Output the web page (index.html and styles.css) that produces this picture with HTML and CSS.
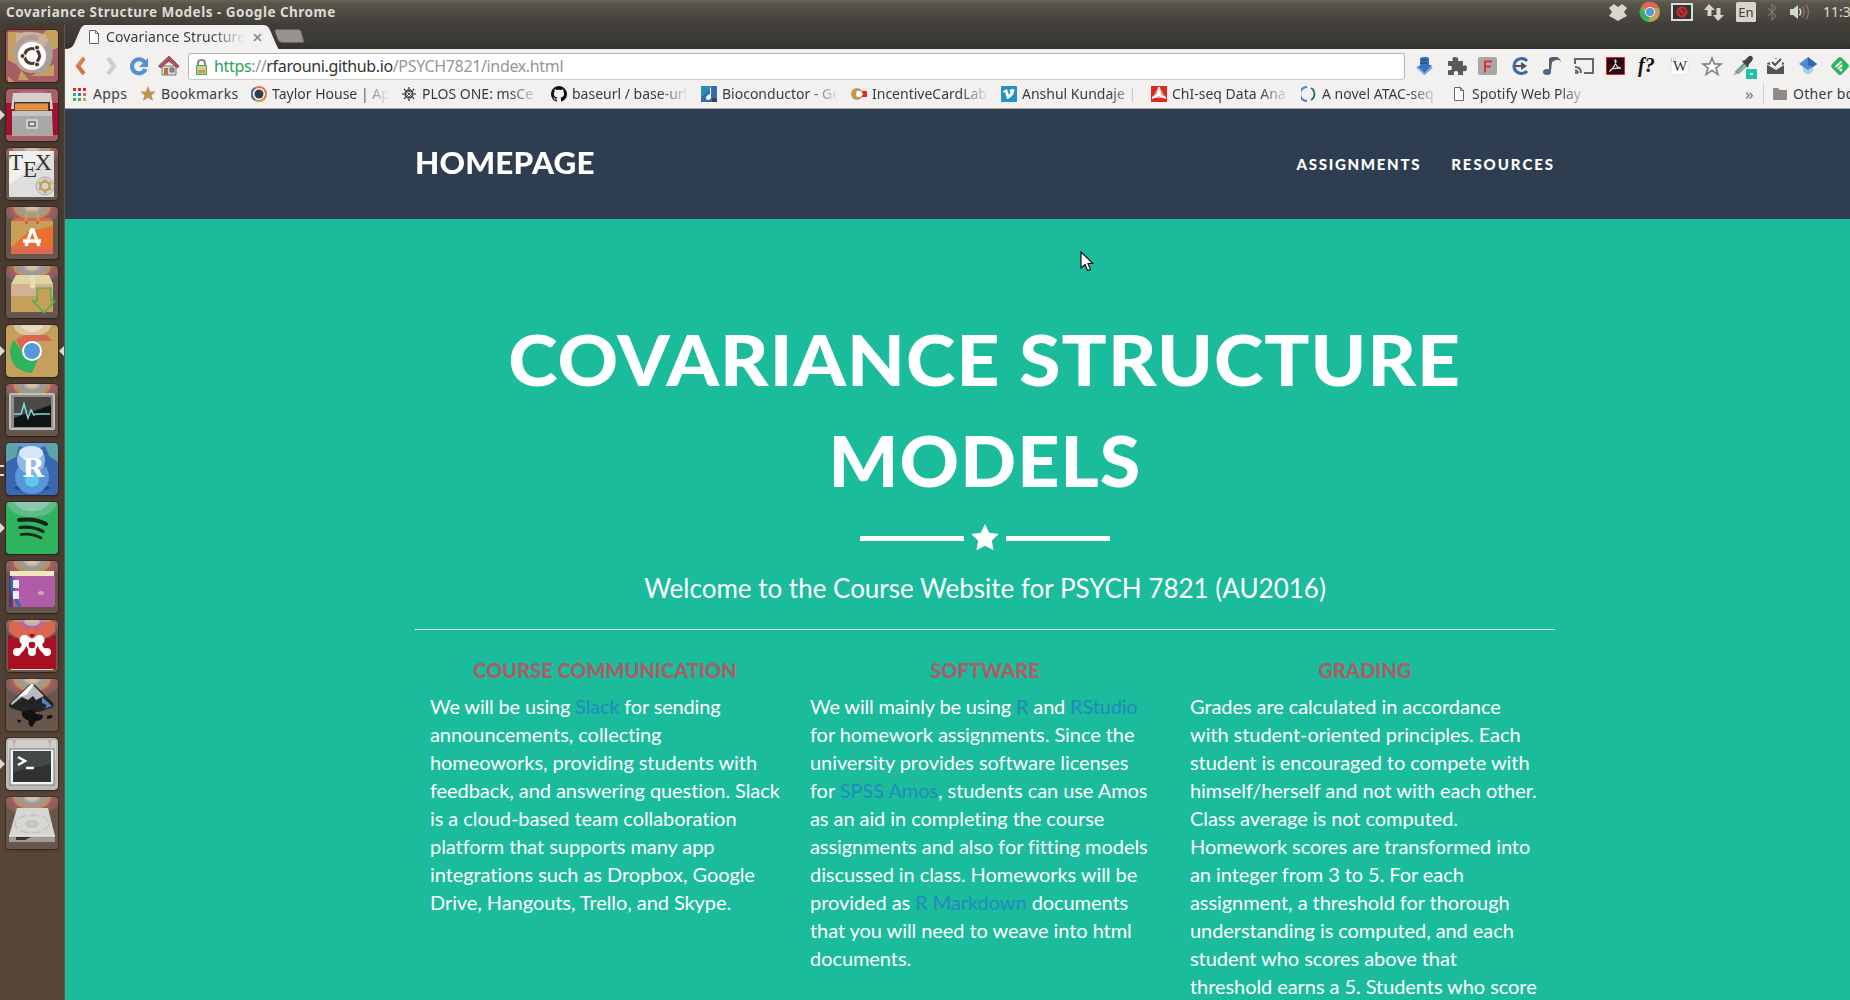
FILE: index.html
```html
<!DOCTYPE html>
<html lang="en">
<head>
<meta charset="utf-8">
<title>Covariance Structure Models</title>
<link rel="stylesheet" href="styles.css">
</head>
<body>
<header class="panel">
  <span class="panel-title">Covariance Structure Models - Google Chrome</span>
  <svg class="tray" width="242" height="24" viewBox="1608 0 242 24">
    <path fill="#d8d5ce" d="M1614 4l4 3 4-3 5 4-3 4 3 4-4 2-5 3-5-3-4-2 3-4-3-4z"/>
    <circle cx="1650" cy="12" r="10" fill="#c4a05a"/>
    <path fill="#d96852" d="M1650 12l-9-5a10 10 0 0 1 18 1h-9z"/>
    <path fill="#2fb35c" d="M1641 7l5 8 4 2-2 5a10 10 0 0 1-7-15z"/>
    <circle cx="1650" cy="12" r="5" fill="#eee"/><circle cx="1650" cy="12" r="4" fill="#5797dc"/>
    <rect x="1672" y="4" width="20" height="16" fill="#333" stroke="#ddd" stroke-width="2"/>
    <circle cx="1682" cy="12" r="4.500" fill="#84202a" stroke="#b93335" stroke-width="2.200"/><path stroke="#b93335" stroke-width="2" d="M1679 9l6 6"/>
    <path fill="#d8d5ce" d="M1709 4l-5 6h3.500v6h4v-6h3.500zM1718 21l-5-6h3.500V8h4v7h3.500z"/>
    <rect x="1736" y="2" width="20" height="20" rx="1.500" fill="#d8d5ce"/>
    <path fill="none" stroke="#77736c" stroke-width="1.300" d="M1768 8l8 8-4 4V4l4 4-8 8"/>
    <path fill="#d8d5ce" d="M1790 9h3l5-4v14l-5-4h-3z"/>
    <path fill="none" stroke="#d8d5ce" stroke-width="1.600" d="M1799.500 8.500q2.500 3.500 0 7"/>
    <path fill="none" stroke="#8c6f64" stroke-width="1.600" d="M1802.500 6.500q3.500 5.500 0 11M1806 4.500q5 7.500 0 15"/>
    <text x="1746" y="17" class="tray-lang">En</text>
    <text x="1823" y="17" class="tray-time">11:3</text>
  </svg>
</header>
<div class="desktop">
  <nav class="launcher">
    <div class="slot"><svg viewBox="0 0 52 52"><rect width="52" height="52" rx="4" fill="#a65d66"/><path fill="#c4a05a" d="M2 2h12l-6 16 2 16 13 16H12l4-12L2 30zM40 0h12v18l-12 4-8-12zM34 42l14-8v12H24zM2 46l6 6H2z"/><circle cx="26" cy="25" r="18" fill="#b7a092"/><path d="M10 4q15-5 30 1l4 10-34 5z" fill="#cfae9b"/><path d="M8 22q8-18 24-14M42 12q8 22-12 32" fill="none" stroke="#a8a09b" stroke-width="5"/><circle cx="26" cy="26" r="14" fill="#fff"/><circle cx="26" cy="26" r="7.500" fill="none" stroke="#4b392f" stroke-width="3.200"/><path d="M26 26h-9M26 26l5-8.500M26 26l5 8.500" stroke="#fff" stroke-width="1.600"/><circle cx="26" cy="26" r="5.500" fill="#fff"/><g fill="#4b392f" stroke="#fff"><circle cx="16.500" cy="26" r="2.500"/><circle cx="31" cy="17.500" r="2.500"/><circle cx="31" cy="34.500" r="2.500"/></g></svg></div>
    <div class="slot on"><svg viewBox="0 0 52 52"><rect width="52" height="52" rx="4" fill="#a65d66"/><path d="M0 14h52v32H0z" fill="#a01030"/><path d="M12 2h28l-5 5H18z" fill="#b764a6"/><path d="M7 4h38l2 16H5z" fill="#d2d0cd"/><path fill="#45332b" d="M8 13h36v9H8z"/><path fill="#dda04c" d="M9 14.500h33v7H9z"/><path d="M9 16h33M9 19h33" stroke="#e9733f"/><path fill="#a8a8a7" d="M6 22h40l1 25H6z"/><path fill="#c4c3c1" d="M6 22h40v5H6z"/><rect x="21" y="31" width="10" height="8" fill="#aaa" stroke="#eee"/><rect x="23" y="33" width="6" height="4" fill="#ddd" stroke="#555"/></svg></div>
    <div class="slot glass"><svg viewBox="0 0 52 52"><path fill="#dededd" d="M3 3h45v46H3z"/><path fill="#f0f0ef" d="M3 3h45L3 37z"/><g class="tex"><text x="3" y="22">T</text><text x="17" y="29">E</text><text x="29" y="22">X</text></g><circle cx="39" cy="38" r="9" fill="#d5d3cd" stroke="#aaa"/><circle cx="39" cy="38" r="4.500" fill="none" stroke="#c4a05a" stroke-width="2.600"/><path stroke="#c4a05a" stroke-width="2.500" d="M39 31v3M39 42v3M33 34.500l2.500 1.500M42.500 40l2.500 1.500M33 41.500l2.500-1.500M42.500 36l2.500-1.500"/></svg></div>
    <div class="slot glass"><svg viewBox="0 0 52 52"><path fill="#d96852" d="M9 11h35l3 4H5z"/><path fill="#c4a05a" d="M5 14h42v33H5z"/><path fill="#e9702f" d="M47 19v28H5v-7l17-15z"/><path fill="#dc6b50" d="M5 40h42v7H5z"/><path d="M20 16V8q0-3 4-3h4q4 0 4 3v8" stroke="#c4a05a" stroke-width="2.500" fill="none"/><path d="M19 17v-3h3v3zM30 17v-3h3v3z" fill="#dc5c42"/><path d="M20 39l5.500-16h1.500l6 16M17 34h18" stroke="#fff" stroke-width="3.300" fill="none"/></svg></div>
    <div class="slot glass"><svg viewBox="0 0 52 52"><path fill="#e0d3a5" d="M10 9h33l4 9H5z"/><path fill="#d2b295" d="M5 18h42v12H5z"/><path fill="#c4a05a" d="M5 30h42v16H5z"/><path fill="#e8ddb0" d="M24 9h5v13h-5z"/><path fill="#c4a05a" stroke="#3bb14f" stroke-width="1.200" d="M31 22h14v13h4L38 47 27 35h4z"/></svg></div>
    <div class="slot on active"><svg viewBox="0 0 52 52"><rect width="52" height="52" rx="4" fill="#c4a05a"/><path fill="#d9c3a0" d="M7 0h38q-3 11-19 11T7 0z"/><path fill="#eadbc6" d="M15 0h22q-2 7-11 7T15 0z"/><path fill="#d96852" d="M10 15q5-5 11-5h20l5 6H27l-8 4-2 7z"/><path fill="#2fb35c" d="M8 15l10 14 14 5-6 14Q5 46 4 27q0-7 4-12z"/><circle cx="26" cy="26" r="10" fill="#fff"/><circle cx="26" cy="26" r="8" fill="#5797dc"/></svg></div>
    <div class="slot glass"><svg viewBox="0 0 52 52"><rect x="3" y="9" width="46" height="37" rx="2" fill="#bdbdbc"/><rect x="5" y="11" width="42" height="33" fill="#8c8c8b"/><rect x="8" y="13" width="37" height="30" fill="#101414"/><path fill="#4b4a48" d="M8 13h37v8L8 34z"/><path fill="none" stroke="#7fddd0" stroke-width="1.500" d="M8 30h7l3-10 4 14 3-8 3 5 2-1h14"/></svg></div>
    <div class="slot double"><svg viewBox="0 0 52 52"><rect width="52" height="52" rx="4" fill="#3b67ae"/><path fill="#5ca3aa" d="M0 0h14l-4 14-10 5zM38 0h14v19l-9-6z"/><path fill="#659ad8" d="M8 0h36q-18 12-36 0z"/><ellipse cx="26" cy="45" rx="18" ry="3" fill="#244c86"/><circle cx="26" cy="34" r="17" fill="#5797dc"/><circle cx="25" cy="17" r="14" fill="#8cb9e8"/><ellipse cx="25" cy="10" rx="12" ry="7" fill="#d5e6f7"/><circle cx="26" cy="37" r="7" fill="#62c7ee"/><text x="27" y="34" class="rstudio">R</text></svg></div>
    <div class="slot on"><svg viewBox="0 0 52 52"><rect width="52" height="52" rx="4" fill="#2fb35c"/><path fill="#5fbd86" d="M0 0h52q-5 15-26 15T0 0z"/><path fill="#8bcaae" d="M8 0h36q-5 9-18 9T8 0z"/><g fill="none" stroke="#17251d" stroke-linecap="round"><path stroke-width="4" d="M13 18q16-2 27 4"/><path stroke-width="3.200" d="M14 25.500q13-1.500 23 4"/><path stroke-width="2.600" d="M15 32.500q11-1.500 20 3.500"/></g></svg></div>
    <div class="slot glass"><svg viewBox="0 0 52 52"><path fill="#f1e5bb" d="M4 10h44v7H4z"/><path fill="#5c356c" d="M3 15h5v31H3z"/><path fill="#b15ca8" d="M6 15h43v29l-2 2H7z"/><path fill="#3b67ae" d="M4 17h5v12l4 8v4l3 5h-4L5 33z"/><path fill="#eee" d="M7 19h6v8H7zM7 30h6v8H7z"/><ellipse cx="35" cy="32" rx="3" ry="2" fill="#d3a5b0"/></svg></div>
    <div class="slot glass"><svg viewBox="0 0 52 52"><path fill="#d96852" d="M3 2h46v10q-10 9-23 9T3 12z"/><path fill="#b764a6" d="M13 2h26q-4 7-13 7T13 2z"/><path fill="#d2b295" d="M17 2h18q-4 4-9 4t-9-4z"/><path fill="#a80f22" d="M2 15q24 12 48 0v34H2z"/><path fill="none" stroke="#fff" stroke-width="4.500" d="M11 32q7-1 8-12h14q1 11 8 12M19 19l7 13 7-13"/><g fill="#fff"><circle cx="11" cy="32" r="4"/><circle cx="41" cy="32" r="4"/><circle cx="26" cy="32" r="4"/><circle cx="18.500" cy="20" r="5"/><circle cx="33.500" cy="20" r="5"/></g><circle cx="26" cy="25" r="3.300" fill="#a80f22"/><path fill="#a80f22" d="M23 14h6l-3 5z"/><path d="M5 49.500h42" stroke="#ddd"/></svg></div>
    <div class="slot glass"><svg viewBox="0 0 52 52"><path fill="#242424" d="M23 6q3-3 6 0l18 18q2 3-2 5l-12 4H17L5 29q-4-2-1-5z"/><path fill="#b7b9bc" d="M26 5l12 12-8 4-3-4-5 4-6-3-10 8q-2-1 0-3z"/><path fill="#fff" d="M25 5q2-1 3 1l-8 10-8 2z"/><path fill="#5a82be" d="M36 18l10 9-8 3q6-4-2-6z"/><path fill="#111" d="M16 33q12-5 14 2l7 1q1 5-7 6l-4 6q-5-2-3-6-9-4-7-9zM41 37q7-3 5 2l-5 1zM11 41q8-1 2 3z"/></svg></div>
    <div class="slot on"><svg viewBox="0 0 52 52"><rect width="52" height="52" rx="4" fill="#bbbab8"/><path fill="#d1cfcc" d="M2 2h48v20H2z"/><path fill="#d5aaa0" d="M6 2h4l-2 8zM42 2h4l-2 8z"/><rect x="4" y="11" width="44" height="36" fill="#f3f3f2" stroke="#777"/><rect x="7" y="13" width="38" height="31" fill="#303232"/><path fill="#444747" d="M7 13h38v13L7 34z"/><path fill="none" stroke="#fff" stroke-width="2.500" d="M12 19l7 4-7 4M20 30h8"/></svg></div>
    <div class="slot glass"><svg viewBox="0 0 52 52"><path fill="#d7d6d3" d="M11 11h31l7 28H3z"/><path fill="#9e9c98" d="M3 39h46v6H3z"/><path fill="#343434" d="M10 40h15l-6 3h-9z"/><ellipse cx="26" cy="27" rx="17" ry="9" fill="none" stroke="#bbb" stroke-dasharray="9 3"/><ellipse cx="26" cy="27" rx="6" ry="3" fill="#cbc9c6" stroke="#b4b2af"/><path d="M3 39h46" stroke="#f7f7f6"/></svg></div>
  </nav>
  <div class="browser">
    <div class="tabs">
      <div class="tab">
        <svg class="tab-bg" width="214" height="25" viewBox="0 0 214 25"><path fill="#f2f1f0" d="M0 25V24q7 0 9-5l6-14q2-5 6-5h177q5 0 7 5l6 14q2 4 3 6z"/></svg>
        <svg width="10" height="14" viewBox="0 0 10 14"><path fill="#fff" stroke="#666" d="M.5.500h6l3 3v10h-9zM6.500.500v3h3"/></svg>
        <span class="tab-title fade">Covariance Structure</span>
        <svg width="9" height="9" viewBox="0 0 9 9"><path stroke="#888" stroke-width="1.700" d="M1 1l7 7M8 1L1 8"/></svg>
      </div>
      <svg class="new-tab" width="31" height="15" viewBox="0 0 31 15"><path fill="#99928f" stroke="#68625f" d="M3 .5h21q2 0 3 2l3 11H8q-3 0-4-3L1 3Q0 .5 3 .5z"/></svg>
    </div>
    <div class="toolbar">
      <svg class="nav-icons" width="108" height="26" viewBox="72 53 108 26">
        <path fill="none" stroke="#dd7046" stroke-width="4" d="M84 58l-6 8 6 8"/><path fill="none" stroke="#c4a05a" stroke-width="1.500" d="M84 57l-6 8"/>
        <path fill="none" stroke="#cfcdca" stroke-width="4" d="M108 58l6 8-6 8"/>
        <path fill="none" stroke="#5590d2" stroke-width="4" d="M144.500 62a7 7 0 1 0 1 7"/><path fill="#5590d2" d="M148 58v9h-9z"/>
        <path fill="#ead7ca" stroke="#777" d="M162 66h14v9h-14z"/><path fill="#b74e55" stroke="#8f555c" d="M158.500 66L169 56l10 10-1.500 2-8.500-7-8.500 7z"/><path fill="#5f8fc4" stroke="#807a70" d="M170 68h4v4h-4z"/><path fill="#b1794a" d="M164 68h4v7h-4z"/>
      </svg>
      <div class="omnibox">
        <svg width="11" height="16" viewBox="0 0 11 16"><path fill="none" stroke="#858585" stroke-width="2" d="M2 7V4q0-3 3.500-3T9 4v3"/><path fill="#d9c894" stroke="#39ae50" d="M.5 6.500h10v9H.5z"/><path fill="#b7a260" d="M2 11h7v3H2z"/></svg>
        <span class="url"><span class="secure">https</span>://<span class="host">rfarouni.github.io</span>/PSYCH7821/index.html</span>
      </div>
      <div class="extensions">
        <svg viewBox="0 0 32 26"><path fill="#3b72bd" d="M12 5l3-1h4l2 1v7h3l-7.500 9L9 13h3z"/><path stroke="#6eacdf" stroke-width="2" fill="none" d="M9 14l7.500 7 7.500-7"/><path stroke="#244f8f" stroke-width="1.500" d="M13 7h6M13 10h6"/></svg>
        <svg viewBox="0 0 32 26"><path fill="#5b5a58" d="M8 8h5q-2-4 2-4t3 4h5v5q4-2 4 2t-4 3v4h-5q1-4-2-4t-2 4H8v-5q4 1 4-2t-4-2z"/></svg>
        <svg viewBox="0 0 32 26"><rect x="6" y="4" width="19" height="18" rx="2" fill="#a8a6a6"/><path stroke="#e2312d" stroke-width="2" fill="none" d="M20 8.500h-7v11M13 13.500h6"/></svg>
        <svg viewBox="0 0 32 26"><path fill="none" stroke="#3b67ae" stroke-width="3" d="M23 8a7.500 7.500 0 1 0 0 10"/><path fill="#555" d="M11 12h6V9l6 4-6 4v-3h-6z"/></svg>
        <svg viewBox="0 0 32 26"><path fill="#4f5f75" d="M13 18V6q0-2 4-2h4q3 1 4 5-2-3-5-2l-4 2-1 9z"/><ellipse cx="11" cy="19" rx="4" ry="3" fill="#4d6688"/></svg>
        <svg viewBox="0 0 32 26"><path fill="none" stroke="#666" stroke-width="2" d="M7 11V6h18v14h-9M7 14q6 0 6 6M7 17.500q3 0 3 3"/><path fill="#666" d="M7 19h2v2H7z"/></svg>
        <svg viewBox="0 0 32 26"><path fill="#230f14" stroke="#e52421" d="M6.500 4.500h18v17h-18z"/><path fill="none" stroke="#e5cbc8" stroke-width="1.300" d="M15 8q0-2 1 0 0 4-6 10 0-3 11-3-5 0-6-7z"/></svg>
        <svg viewBox="0 0 32 26"><text x="6" y="19" class="whatfont">f?</text></svg>
        <svg viewBox="0 0 32 26"><rect x="7" y="4" width="17" height="18" rx="2" fill="#fbfbfa" stroke="#e7e5e2"/><path stroke="#64a8d9" stroke-dasharray="1 1" d="M7 6h5M7 8h3"/><text x="9" y="18" class="wiki">W</text></svg>
        <svg viewBox="0 0 32 26"><path fill="#fbfaf9" stroke="#7a7977" stroke-width="1.500" d="M16 5l2.400 6H25l-5 4 2 6.500-6-4-6 4 2-6.500-5-4h6.600z"/></svg>
        <svg viewBox="0 0 32 26"><path stroke="#79bdb3" stroke-width="4" d="M8 20L18 10"/><path stroke="#777" stroke-width="1" d="M6 22l12-13M10 21L20 12"/><path fill="#444" d="M14 8l3-1 4-4q3-1 4 2l-1 3-3 3-1 4z"/><rect x="18" y="16" width="11" height="10" rx="1" fill="#20c3aa"/><path fill="#e9eee9" d="M22 20h3v2h-3z"/></svg>
        <svg viewBox="0 0 32 26"><path fill="#555453" d="M8 10l8-5 8 5v11H7V10z"/><path fill="#f4f3f2" d="M10 6h12v7l-6 3-6-3z"/><path stroke="#555453" stroke-width="2" fill="none" d="M12 9l3 3 6-6"/><path stroke="#f4f3f2" fill="none" d="M7 11l9 5.500 9-5.500"/></svg>
        <svg viewBox="0 0 32 26"><path fill="#a8d0ee" d="M11 13h10v5q-5 7-10 0z"/><path fill="#4f8bd1" d="M16 4l9 7-9 6-9-6z"/><path fill="#3766aa" d="M16 4l9 7-4 3-5-2z"/></svg>
        <svg viewBox="0 0 32 26"><rect x="9" y="6" width="14" height="14" rx="2.500" fill="#2fb35c" transform="rotate(45 16 13)"/><path fill="none" stroke="#fff" stroke-width="1.900" d="M11.500 14l6-5.500M14 16l4-4M16 18l2-2"/></svg>
      </div>
    </div>
    <div class="bookmarks">
      <div class="bm apps"><svg viewBox="0 0 16 16"><path fill="#d92c2c" d="M1 2h3v3H1zM6 2h3v3H6zM11 2h3v3h-3z"/><path fill="#2fb35c" d="M1 7h3v3H1zM1 12h3v3H1zM6 12h3v3H6z"/><path fill="#3b72c3" d="M6 7h3v3H6z"/><path fill="#d96852" d="M11 7h3v3h-3z"/><path fill="#c4a05a" d="M11 12h3v3h-3z"/></svg><span>Apps</span></div>
      <div class="bm marks"><svg viewBox="0 0 16 16"><path fill="#bd924c" d="M8 0l2.200 5.600H16l-4.500 3.600L13.200 15 8 11.700 2.800 15l1.700-5.800L0 5.600h5.800z"/></svg><span>Bookmarks</span></div>
      <div class="bm"><svg viewBox="0 0 16 16"><circle cx="8" cy="8" r="7" fill="#fff" stroke="#e87337" stroke-width="2"/><path fill="none" stroke="#4777a1" stroke-width="2" d="M4 2a7 7 0 0 0 0 12"/><path fill="none" stroke="#c4a05a" stroke-width="2" d="M4 14q5 3 9-2"/><circle cx="8" cy="8" r="4.500" fill="#283d51"/></svg><span class="fade">Taylor House | Ap</span></div>
      <div class="bm"><svg viewBox="0 0 16 16"><circle cx="8" cy="8" r="4" fill="none" stroke="#444" stroke-width="1.500"/><path d="M8 1v14M1 8h14M3 3l10 10M13 3L3 13" stroke="#222" stroke-width="1.200" stroke-dasharray="2 1"/></svg><span class="fade">PLOS ONE: msCe</span></div>
      <div class="bm"><svg viewBox="0 0 16 16"><path fill="#111" d="M8 0C3.600 0 0 3.600 0 8c0 3.500 2.300 6.500 5.500 7.600.4.100.5-.2.500-.4v-1.500c-2.200.5-2.700-.9-2.700-.9-.4-1-.9-1.200-.9-1.200-.7-.5.100-.5.100-.5.800.1 1.200.8 1.200.8.700 1.200 1.900.9 2.300.7.100-.5.300-.9.500-1.100-1.800-.2-3.600-.9-3.600-4 0-.9.300-1.600.8-2.100-.1-.2-.4-1 .1-2.100 0 0 .7-.2 2.200.8a8 8 0 0 1 4 0c1.500-1 2.200-.8 2.200-.8.400 1.100.2 1.900.1 2.100.5.600.8 1.300.8 2.100 0 3.100-1.900 3.800-3.700 4 .3.300.6.800.6 1.500v2.200c0 .2.100.5.500.4A8 8 0 0 0 8 0z"/></svg><span class="fade">baseurl / base-url</span></div>
      <div class="bm"><svg viewBox="0 0 16 16"><path fill="#3c68ae" d="M0 0h16v16H0z"/><path fill="#268fb5" d="M0 0h10v3L0 11z"/><path fill="#2c455e" d="M11 12h5v4h-5z"/><path fill="#fff" d="M9 1l1 1v10q-1 2-3 2t-2-2 2-3l2-1z"/></svg><span class="fade">Bioconductor - Ge</span></div>
      <div class="bm"><svg viewBox="0 0 16 16"><circle cx="6" cy="8" r="6" fill="#c09952"/><path fill="#e12a2a" d="M10 5h6v6h-6z"/><path fill="#fff" d="M6 5h4l2 3-2 3H6L5 8z"/></svg><span class="fade">IncentiveCardLab</span></div>
      <div class="bm"><svg viewBox="0 0 16 16"><rect width="16" height="16" rx="1" fill="#268fcb"/><path fill="#fff" d="M2 5l4-2 2 6q3-4 0-4 1-2 4-2 2 0 1 3-1 4-6 7H6L4 6 3 7z"/></svg><span class="fade">Anshul Kundaje |</span></div>
      <div class="bm"><svg viewBox="0 0 16 16"><path fill="#e22822" d="M0 0h16v16H0z"/><path fill="#d6ad9c" d="M8 1l7 11H1z"/><path fill="#fff" d="M7 1h2l1 8 5 2v2L8 10l-7 3v-2l5-3z"/></svg><span class="fade">ChI-seq Data Ana</span></div>
      <div class="bm"><svg viewBox="0 0 16 16"><path fill="none" stroke="#4b86c4" stroke-width="2" d="M6 1a7 7 0 0 0 0 14"/><path fill="none" stroke="#286a6a" stroke-width="1.800" d="M10 2a7 7 0 0 1 0 12"/></svg><span class="fade">A novel ATAC-seq</span></div>
      <div class="bm"><svg viewBox="0 0 16 16"><path fill="#fff" stroke="#666" d="M3.500 1.500h6l3 3v10h-9zM9.500 1.500v3h3"/></svg><span class="fade">Spotify Web Play</span></div>
      <span class="more">»</span>
      <div class="bm other"><svg viewBox="0 0 16 16"><path fill="#8d8a88" d="M1 3q0-1 1-1h4l2 2h6q1 0 1 1v8q0 1-1 1H2q-1 0-1-1z"/></svg><span>Other bo</span></div>
    </div>
    <div class="page">
      <div class="navbar"><div class="container nav-row">
        <a class="brand">HOMEPAGE</a>
        <div class="links"><a class="assignments">ASSIGNMENTS</a><a class="resources">RESOURCES</a></div>
      </div></div>
      <main class="hero">
        <div class="container">
          <h1><span class="h1-a">COVARIANCE STRUCTURE</span><br><span class="h1-b">MODELS</span></h1>
          <div class="star-divider"><i></i><svg width="28" height="27" viewBox="0 0 28 27"><path fill="#fff" d="M14 0l4.200 8.700 9.500 1.400-6.900 6.700 1.700 9.500L14 21.800l-8.500 4.500 1.700-9.500L.3 10.100l9.500-1.400z"/></svg><i></i></div>
          <p class="welcome">Welcome to the Course Website for PSYCH 7821 (AU2016)</p>
          <hr>
          <div class="columns">
            <section><h2 class="communication">COURSE COMMUNICATION</h2><p><span class="tight">We will be using <a>Slack</a> for sending</span><br>announcements, collecting<br>homeoworks, providing students with<br>feedback, and answering question. Slack<br>is a cloud-based team collaboration<br>platform that supports many app<br>integrations such as Dropbox, Google<br>Drive, Hangouts, Trello, and Skype.</p></section>
            <section><h2 class="software">SOFTWARE</h2><p><span class="tight">We will mainly be using <a>R</a> and <a>RStudio</a></span><br>for homework assignments. Since the<br>university provides software licenses<br>for <a>SPSS Amos</a>, students can use Amos<br>as an aid in completing the course<br>assignments and also for fitting models<br>discussed in class. Homeworks will be<br>provided as <a>R Markdown</a> documents<br>that you will need to weave into html<br>documents.</p></section>
            <section><h2 class="grading">GRADING</h2><p>Grades are calculated in accordance<br>with student-oriented principles. Each<br>student is encouraged to compete with<br>himself/herself and not with each other.<br>Class average is not computed.<br>Homework scores are transformed into<br>an integer from 3 to 5. For each<br>assignment, a threshold for thorough<br>understanding is computed, and each<br>student who scores above that<br>threshold earns a 5. Students who score</p></section>
          </div>
        </div>
      </main>
    </div>
  </div>
</div>
<svg class="cursor" width="14" height="22" viewBox="0 0 14 22"><path fill="#fff" stroke="#111" stroke-width="1.200" d="M1 1v16l4-3.500 2.500 6 3-1.200-2.500-5.800h5z"/></svg>
</body>
</html>
```
FILE: styles.css
```css
* { box-sizing: border-box; }
body { margin: 0; width: 1850px; height: 1000px; overflow: hidden; font-family: "Noto Sans", sans-serif; }
svg { display: block; flex: none; }

.panel { height: 24px; display: flex; align-items: center; justify-content: space-between; padding-left: 6px; background: linear-gradient(#686353 0, #59564b 3px, #413f39 100%); }
.panel-title { color: #dfdbd2; font-weight: 700; font-size: 13.5px; letter-spacing: .49px; line-height: 24px; white-space: nowrap; }
.tray-lang { font-size: 13px; fill: #3c3b37; text-anchor: middle; }
.tray-time { font-size: 14px; fill: #dfdbd2; }

.desktop { display: flex; height: 976px; }
.launcher { width: 65px; flex: none; padding: 6px 7px 0 0; display: flex; flex-direction: column; gap: 7px; background: linear-gradient(#493a2f, #4b3b30 55%, #574637 80%); border-right: 1px solid #665448; }
.slot { height: 52px; width: 64px; padding: 0 6px; display: flex; align-items: center; position: relative; flex: none; }
.slot svg { width: 52px; height: 52px; border-radius: 4px; box-shadow: 0 0 0 1px #0003, 0 1px 3px #0005; }
.glass svg { background: radial-gradient(ellipse 30px 20px at 50% 0, #d8c5b2 0, #cdb9ab 20%, #9e9995 30%, #9e9995 48%, #bd8f58 52%, #bd8f58 60%, #a65d66 66%, #8f5c5c 85%, #75665c 92%, #67564b 100%); }
.on::before, .active::after { content: ""; position: absolute; top: 21px; border: 5px solid transparent; }
.on::before { left: 0; border-left-color: #ddd8d2; border-right-width: 0; }
.active::after { right: 0; border-right-color: #ddd8d2; border-left-width: 0; }
.double::before { content: ""; position: absolute; left: 0; top: 22px; width: 4px; height: 7px; border: solid #ddd8d2; border-width: 2px 0; }
.tex { font: 23px "Liberation Serif", serif; fill: #333; }
.rstudio { font: bold 26px "DejaVu Serif", serif; fill: #fff; text-anchor: middle; }

.browser { width: 1785px; flex: none; }
.tabs { height: 25px; padding-top: 1px; display: flex; background: linear-gradient(#403e39, #3b3935 70%, #32302c); }
.tab { width: 209px; height: 24px; padding-left: 24px; display: flex; align-items: center; position: relative; color: #3b3b3b; font-size: 14px; }
.tab-bg { position: absolute; left: 0; top: 0; z-index: 0; }
.tab > :not(.tab-bg) { position: relative; }
.tab-title { width: 139px; margin: 0 8px 0 7px; letter-spacing: .1px; line-height: 24px; }
.fade { overflow: hidden; white-space: nowrap; -webkit-mask-image: linear-gradient(90deg, #000 75%, transparent); mask-image: linear-gradient(90deg, #000 75%, transparent); }
.new-tab { margin-top: 4px; }
.toolbar { height: 32px; padding: 4px 0 2px 7px; display: flex; background: #f2f1f0; }
.omnibox { width: 1217px; flex: none; height: 27px; margin: 0 3px 0 8px; padding-left: 7px; display: flex; align-items: center; gap: 7px; border: 1px solid #b7b5b1; border-bottom-color: #cfccc8; border-radius: 3px; background: #fff; }
.url { color: #969696; font-size: 16px; letter-spacing: -.35px; line-height: 25px; white-space: nowrap; }
.secure { color: #28a359; }
.host { color: #333; }
.extensions { display: flex; flex: none; width: 448px; }
.extensions svg { width: 32px; height: 26px; overflow: visible; }
.whatfont { font: italic bold 20px "Liberation Serif", serif; fill: #111; }
.wiki { font: 15px "Liberation Serif", serif; fill: #333; }
.bookmarks { height: 28px; padding-left: 7px; padding-bottom: 2px; display: flex; align-items: center; overflow: hidden; background: #f2f1f0; border-bottom: 1px solid #a5a39f; color: #3b3b3b; font-size: 14px; }
.bm { width: 150px; flex: none; display: flex; align-items: center; gap: 5px; white-space: nowrap; line-height: 25px; }
.bm svg { width: 16px; height: 16px; }
.bm span { width: 117px; }
.bm.apps { width: 68px; letter-spacing: .4px; }
.bm.marks { width: 111px; letter-spacing: .35px; }
.more { width: 18px; flex: none; margin-left: 144px; line-height: 20px; color: #777; font-size: 17px; }
.other { border-left: 1px solid #c8d1dc; padding-left: 8px; line-height: 22px; letter-spacing: .3px; }

.page { height: 891px; background: #1abc9c; color: #fff; font-family: Lato, sans-serif; }
.container { width: 1140px; margin-left: 350px; }
.navbar { height: 110px; background: #2e3e50; }
.nav-row { display: flex; justify-content: space-between; padding-top: 33px; font-weight: 900; white-space: nowrap; }
.brand { font-size: 30px; line-height: 40px; letter-spacing: .2px; transform: scaleX(1.048); transform-origin: 0 0; }
.links { display: flex; gap: 30px; font-size: 15px; line-height: 44px; }
.assignments { letter-spacing: 1.7px; }
.resources { letter-spacing: 1.95px; }
.hero { padding-top: 90px; }
h1 { margin: 0; text-align: center; font-weight: 900; font-size: 70px; line-height: 101px; white-space: nowrap; }
.h1-a, .h1-b { display: inline-block; letter-spacing: 1px; }
.h1-a { transform: scaleX(1.069); }
.h1-b { transform: scaleX(1.05); }
.star-divider { height: 27px; margin-top: 13px; display: flex; justify-content: center; align-items: center; gap: 7px; }
.star-divider i { width: 104px; height: 5px; margin-top: 2px; background: #fff; }
.welcome { margin: 17px 0 0; text-align: center; font-size: 26px; line-height: 40px; }
hr { height: 1px; border: 0; margin: 21px 0 18px; background: #e6fff9; }
.columns { display: flex; }
section { width: 380px; padding: 0 15px; }
h2 { margin: 0; text-align: center; color: #ab5d68; font-weight: 900; font-size: 20px; line-height: 44px; white-space: nowrap; }
section p { margin: 0; font-size: 20px; line-height: 28px; letter-spacing: -.07px; white-space: nowrap; }
.tight { letter-spacing: -.17px; }
section a { color: #2489bf; }
.cursor { position: absolute; left: 1080px; top: 251px; }
```
